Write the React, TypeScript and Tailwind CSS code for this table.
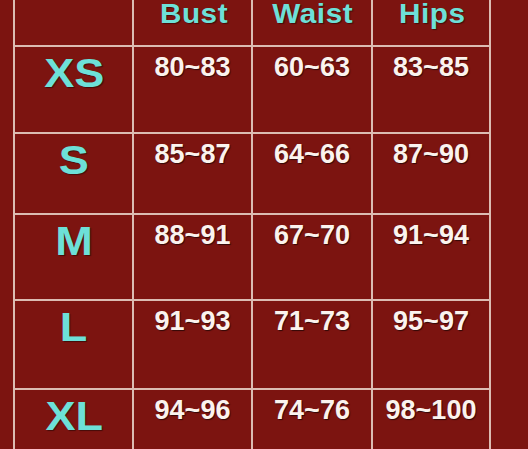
// Size chart — bust / waist / hips per size, on a dark red board.
const headers = ["Bust", "Waist", "Hips"];

const rows = [
  { size: "XS", values: ["80~83", "60~63", "83~85"] },
  { size: "S", values: ["85~87", "64~66", "87~90"] },
  { size: "M", values: ["88~91", "67~70", "91~94"] },
  { size: "L", values: ["91~93", "71~73", "95~97"] },
  { size: "XL", values: ["94~96", "74~76", "98~100"] },
];

export default function App() {
  return (
    <div className="h-[449px] w-[528px] overflow-hidden bg-[#7c1410] font-['Liberation_Sans',Arial,sans-serif] font-bold">
      <div className="ml-[13px] grid w-[478px] grid-cols-[117px_117px_118px_116px] grid-rows-[45px_85px_79px_84px_87px_70px] gap-[2px] border-x-2 border-[#dcbcb2] bg-[#dcbcb2]">
        <div className="bg-[#7c1410]" />
        {headers.map((h) => (
          <div key={h} className="flex justify-center bg-[#7c1410] pl-[2px] pt-[1px]">
            <span className="scale-x-[1.1] text-[27px] leading-[27px] tracking-[0.5px] text-[#6de0d8] [text-shadow:1px_1px_1px_rgba(0,0,0,0.45)]">
              {h}
            </span>
          </div>
        ))}

        {rows.map((row) => (
          <div key={row.size} className="contents">
            <div className="flex justify-center bg-[#7c1410] pl-[1px] pt-[6px]">
              <span className="scale-x-[1.1] text-[41px] leading-[40px] text-[#6de0d8] [text-shadow:1px_1px_1px_rgba(0,0,0,0.45)]">
                {row.size}
              </span>
            </div>
            {row.values.map((v, i) => (
              <div
                key={i}
                className="flex justify-center bg-[#7c1410] pt-[7px] text-[27px] leading-[27px] text-[#fbf3ee] [text-shadow:1px_1px_1px_rgba(0,0,0,0.6)]"
              >
                {v}
              </div>
            ))}
          </div>
        ))}
      </div>
    </div>
  );
}
